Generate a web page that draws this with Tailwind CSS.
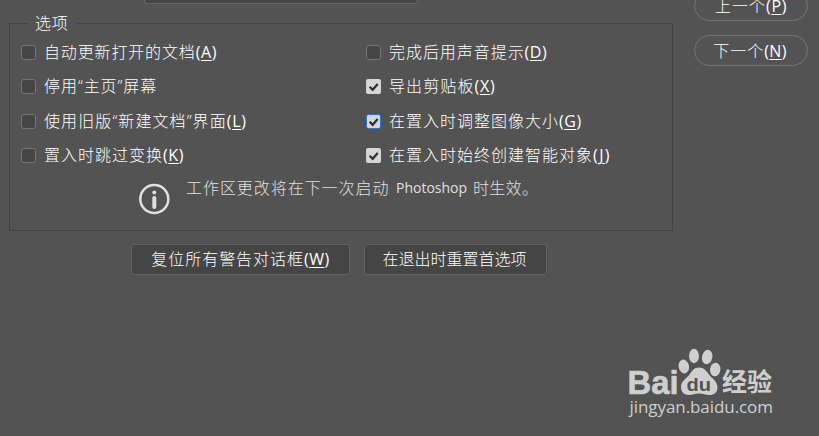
<!DOCTYPE html>
<html lang="zh-CN">
  <head>
    <meta charset="UTF-8" />
    <meta name="viewport" content="width=device-width, initial-scale=1.0" />
    <title>首选项</title>
    <script src="https://cdn.jsdelivr.net/npm/@tailwindcss/browser@4"></script>
  </head>
  <body
    class="relative flex h-[436px] w-[819px] items-start overflow-hidden bg-[#535353] font-['Open_Sans','Noto_Sans_CJK_SC',sans-serif] text-base leading-[22px] font-light text-white"
  >
    <main class="w-[673px] shrink-0 pl-[9px]">
      <div
        class="ml-[135px] h-1 w-[274px] rounded-b-[3px] border border-t-0 border-[#666666] bg-[#454545]"
      ></div>

      <fieldset class="mt-[10px] h-[217px] border border-[#424242] pl-[11px]">
        <legend class="ml-[7px] h-[18px] w-[49px] pl-[7px] leading-[18px] tracking-[0.8px]">
          选项
        </legend>
        <div class="grid grid-cols-[345px_1fr] grid-rows-[35px_34px_35px_34px] pt-[2px]">
          <label class="flex items-center gap-2">
            <span class="mt-px size-[15px] rounded-[3px] border border-[#757575] bg-[#454545]"></span>
            <span class="flex whitespace-nowrap"><span class="tracking-[0.85px]">自动更新打开的文档</span><span class="font-normal tracking-[0.6px]">(<u class="underline-offset-2">A</u>)</span></span>
          </label>
          <label class="flex items-center gap-2">
            <span class="mt-px size-[15px] rounded-[3px] border border-[#757575] bg-[#454545]"></span>
            <span class="flex whitespace-nowrap"><span class="tracking-[0.95px]">完成后用声音提示</span><span class="font-normal tracking-[0.5px]">(<u class="underline-offset-2">D</u>)</span></span>
          </label>
          <label class="flex items-center gap-2">
            <span class="mt-px size-[15px] rounded-[3px] border border-[#757575] bg-[#454545]"></span>
            <span class="whitespace-nowrap tracking-[0.95px]">停用“主页”屏幕</span>
          </label>
          <label class="flex items-center gap-2">
            <svg class="mt-px size-[15px] rounded-[2px] bg-[#d6d6d6]" viewBox="0 0 15 15" fill="none">
              <path d="M3.700 7.800l3 3L11.700 5" stroke="#303030" stroke-width="2.200" />
            </svg>
            <span class="flex whitespace-nowrap"><span class="tracking-[1.1px]">导出剪贴板</span><span class="font-normal tracking-[0.7px]">(<u class="underline-offset-2">X</u>)</span></span>
          </label>
          <label class="flex items-center gap-2">
            <span class="mt-px size-[15px] rounded-[3px] border border-[#757575] bg-[#454545]"></span>
            <span class="flex whitespace-nowrap"><span class="tracking-[1.1px]">使用旧版“新建文档”界面</span><span class="font-normal tracking-[0.7px]">(<u class="underline-offset-2">L</u>)</span></span>
          </label>
          <label class="flex items-center gap-2">
            <svg class="mt-px size-[15px]" viewBox="0 0 15 15" fill="none">
              <rect x="0.500" y="0.500" width="14" height="14" rx="2" fill="#d6d6d6" stroke="#2672d8" />
              <path d="M3.700 7.800l3 3L11.700 5" stroke="#303030" stroke-width="2.200" />
            </svg>
            <span class="flex whitespace-nowrap"><span class="tracking-[1px]">在置入时调整图像大小</span><span class="font-normal tracking-[0.5px]">(<u class="underline-offset-2">G</u>)</span></span>
          </label>
          <label class="flex items-center gap-2">
            <span class="mt-px size-[15px] rounded-[3px] border border-[#757575] bg-[#454545]"></span>
            <span class="flex whitespace-nowrap"><span class="tracking-[1px]">置入时跳过变换</span><span class="font-normal tracking-[0.6px]">(<u class="underline-offset-2">K</u>)</span></span>
          </label>
          <label class="flex items-center gap-2">
            <svg class="mt-px size-[15px] rounded-[2px] bg-[#d6d6d6]" viewBox="0 0 15 15" fill="none">
              <path d="M3.700 7.800l3 3L11.700 5" stroke="#303030" stroke-width="2.200" />
            </svg>
            <span class="flex whitespace-nowrap"><span class="tracking-[1px]">在置入时始终创建智能对象</span><span class="font-normal tracking-[1.4px]">(<u class="underline-offset-2">J</u>)</span></span>
          </label>
        </div>

        <div class="flex items-start pt-[5px] pl-[117px] text-[#e0e0e0]">
          <svg class="mt-[6px] mr-[16px] size-8" viewBox="0 0 32 32" fill="none">
            <circle cx="16.300" cy="16" r="14" stroke="#e0e0e0" stroke-width="2.500" />
            <circle cx="16.300" cy="9.600" r="2" fill="#e0e0e0" />
            <path d="M16.300 15v9" stroke="#e0e0e0" stroke-width="4" stroke-linecap="round" />
          </svg>
          <p class="flex whitespace-nowrap">
            <span class="w-[210px] tracking-[0.95px]">工作区更改将在下一次启动</span>
            <span class="w-[77px] text-[14px] font-normal">Photoshop</span>
            <span class="tracking-[0.3px]">时生效。</span>
          </p>
        </div>
      </fieldset>

      <div class="mt-[13px] ml-[122px] flex gap-[14px]">
        <button
          class="flex h-[31px] w-[219px] items-center justify-center rounded-[3px] border border-[#626262] bg-[#454545] pb-0.5"
        >
          <span class="tracking-[0.95px]">复位所有警告对话框</span><span class="font-normal tracking-[0.5px]">(<u class="underline-offset-2">W</u>)</span>
        </button>
        <button
          class="flex h-[31px] w-[183px] items-center justify-center rounded-[3px] border border-[#626262] bg-[#454545] pr-0.5 pb-0.5"
        >
          在退出时重置首选项
        </button>
      </div>
    </main>

    <aside class="-mt-[10px] flex w-[115px] shrink-0 flex-col gap-[14px] pl-[21px]">
      <button
        class="flex h-[31px] w-[114px] items-center justify-center rounded-full border border-[#757575]"
      >
        <span class="tracking-[1px]">上一个</span><span class="font-normal tracking-[0.6px]">(<u class="underline-offset-2">P</u>)</span>
      </button>
      <button
        class="flex h-[31px] w-[114px] items-center justify-center rounded-full border border-[#757575] pr-0.5"
      >
        <span class="tracking-[1px]">下一个</span><span class="font-normal tracking-[0.3px]">(<u class="underline-offset-2">N</u>)</span>
      </button>
    </aside>

    <!-- watermark -->
    <svg
      class="absolute top-[340px] left-[610px] h-[90px] w-[180px]"
      viewBox="0 0 180 90"
      fill="#cfcfcf"
    >
      <text x="17.500" y="53.500" font-family="Liberation Sans" font-weight="700" font-size="33" stroke="#cfcfcf" stroke-width="0.600" textLength="51" lengthAdjust="spacingAndGlyphs">Bai</text>
      <ellipse cx="73.800" cy="26.500" rx="5.200" ry="7" transform="rotate(-12 73.800 26.500)" />
      <ellipse cx="84" cy="16" rx="5" ry="7.200" />
      <ellipse cx="97.200" cy="17" rx="5.200" ry="7.200" transform="rotate(12 97.200 17)" />
      <ellipse cx="105.200" cy="29.500" rx="5.200" ry="6.800" transform="rotate(8 105.200 29.500)" />
      <path d="M89 27.500c5 0 7.500 3.500 10 7 3 4 8.500 7 8.500 13 0 5-3.500 7.500-8 7.500-4 0-6-1.500-10.500-1.500S82.500 55 79 55c-5 0-8-3-8-8 0-6 5.500-8.500 8.500-12.500 2.500-3.500 4.500-7 9.500-7z" />
      <text x="76.500" y="50.500" font-family="Liberation Sans" font-weight="700" font-size="18.500" fill="#535353" textLength="24.500" lengthAdjust="spacingAndGlyphs">du</text>
      <text x="112" y="51" font-family="Noto Sans CJK SC" font-weight="700" font-size="24.500" textLength="50" lengthAdjust="spacingAndGlyphs">经验</text>
      <text x="19.500" y="73" font-family="Open Sans" font-weight="500" font-size="17" textLength="143.500" lengthAdjust="spacing">jingyan.baidu.com</text>
    </svg>
  </body>
</html>
